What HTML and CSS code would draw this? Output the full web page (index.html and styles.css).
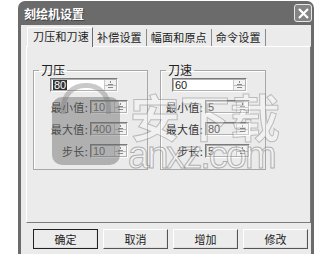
FILE: index.html
```html
<!DOCTYPE html>
<html lang="zh-CN">
<head>
    <meta charset="UTF-8">
    <title>刻绘机设置</title>
    <link rel="stylesheet" href="styles.css">
</head>
<body>
    <div class="window">
        <div class="titlebar">
            <span class="title">刻绘机设置</span>
            <span class="close">
                <svg width="13" height="13" viewBox="0 0 13 13"><path d="M2 2 L11 11 M11 2 L2 11" stroke="#fff" stroke-width="2.2"/></svg>
            </span>
        </div>
        <div class="body">
            <div class="tabs">
                <div class="tab active">刀压和刀速</div>
                <div class="tab">补偿设置</div>
                <div class="tab">幅面和原点</div>
                <div class="tab">命令设置</div>
            </div>
            <div class="panel">
                <fieldset class="group group-left">
                    <legend>刀压</legend>
                    <div class="spin spin-main"><span class="val"><span class="sel">80</span></span><span class="arrows"></span></div>
                    <div class="row"><label>最小值:</label><div class="spin spin-sub"><span class="val">10</span><span class="arrows"></span></div></div>
                    <div class="row"><label>最大值:</label><div class="spin spin-sub"><span class="val">400</span><span class="arrows"></span></div></div>
                    <div class="row"><label>步长:</label><div class="spin spin-sub"><span class="val">10</span><span class="arrows"></span></div></div>
                </fieldset>
                <fieldset class="group group-right">
                    <legend>刀速</legend>
                    <div class="spin spin-main"><span class="val">60</span><span class="arrows"></span></div>
                    <div class="row"><label>最小值:</label><div class="spin spin-sub"><span class="val">5</span><span class="arrows"></span></div></div>
                    <div class="row"><label>最大值:</label><div class="spin spin-sub"><span class="val">80</span><span class="arrows"></span></div></div>
                    <div class="row"><label>步长:</label><div class="spin spin-sub"><span class="val">5</span><span class="arrows"></span></div></div>
                </fieldset>
            </div>
            <div class="buttons">
                <button class="btn default">确定</button>
                <button class="btn">取消</button>
                <button class="btn">增加</button>
                <button class="btn">修改</button>
            </div>
        </div>
        <div class="wm-lock"><span class="wm-shackle"></span></div>
        <div class="wm-cn">安下载</div>
        <div class="wm-en">anxz.com</div>
    </div>
</body>
</html>
```

FILE: styles.css
```css
body {
    margin: 0;
    background: #fff;
    font-family: "Noto Sans CJK SC", "DejaVu Sans", sans-serif;
    font-size: 11px;
    color: #222;
}
.window {
    position: relative;
    margin: 1px 0 0 18px;
    width: 296px;
    height: 253px;
    box-sizing: border-box;
    padding: 0 3px;
    background: #6b6b6b;
    border-radius: 7px 7px 0 0;
    display: flex;
    flex-direction: column;
    overflow: hidden;
}
.titlebar {
    height: 24px;
    display: flex;
    align-items: center;
    justify-content: space-between;
    padding-left: 3px;
}
.title {
    color: #fff;
    font-size: 12px;
    font-weight: bold;
    text-shadow: 1px 1px 0 #444;
}
.close {
    width: 16px;
    height: 16px;
    border: 1px solid #e6e6e6;
    border-radius: 3px;
    background: #848484;
    display: flex;
    align-items: center;
    justify-content: center;
    margin-right: -1px;
}
.body {
    flex: 1;
    background: #ebebeb;
    padding: 3px 0 0 5px;
}
.tabs {
    display: flex;
    height: 18px;
    padding-left: 1px;
}
.tab {
    height: 17px;
    line-height: 17px;
    padding: 0 4px;
    margin-top: 1px;
    border-right: 1px solid #8a8a8a;
    letter-spacing: 0.2px;
    color: #222;
}
.tab.active {
    position: relative;
    z-index: 1;
    height: 19px;
    margin-top: -1px;
    margin-bottom: -1px;
    padding: 0 3px 0 5px;
    background: #ebebeb;
    border-left: 1px solid #fff;
    border-top: 1px solid #fff;
    border-right: 1px solid #6a6a6a;
}
.panel {
    width: 285px;
    height: 177px;
    box-sizing: border-box;
    border: 1px solid;
    border-color: #fff #7a7a7a #7a7a7a #fff;
    padding: 16px 0 0 6px;
    display: flex;
    align-items: flex-start;
}
.group {
    margin: 0;
    padding: 1px 0 0 0;
    border: 1px solid #a8a8a8;
    box-shadow: 1px 1px 0 #fff inset;
    height: 107px;
    box-sizing: border-box;
    display: flex;
    flex-direction: column;
    gap: 8px;
}
.group legend {
    margin-left: 5px;
    padding: 0 2px;
    font-size: 12px;
    line-height: 14px;
}
.group-left {
    width: 115px;
}
.group-right {
    width: 106px;
    margin-left: 12px;
}
.spin {
    height: 14px;
    box-sizing: border-box;
    border: 1px solid;
    border-color: #7a7a7a #fff #fff #7a7a7a;
    outline: 1px solid #b0b0b0;
    outline-offset: -2px;
    background: #fff;
    display: flex;
}
.spin .val {
    flex: 1;
    padding-left: 2px;
    line-height: 12px;
    font-family: "Liberation Sans", Arial, sans-serif;
    font-size: 11px;
}
.sel {
    background: #333;
    color: #fff;
    padding: 0 1px;
}
.arrows {
    width: 12px;
    border-left: 1px solid #c8c8c8;
    background:
        linear-gradient(#8a8a8a, #8a8a8a) 3px 5px / 5px 1px no-repeat,
        linear-gradient(#bbb, #bbb) 0 6px / 12px 1px no-repeat,
        linear-gradient(#8a8a8a, #8a8a8a) 5px 2px / 1px 2px no-repeat,
        linear-gradient(#8a8a8a, #8a8a8a) 3px 8px / 5px 1px no-repeat,
        #f2f2f2;
}
.spin-main {
    width: 68px;
    margin-left: 16px;
}
.group-right .spin-main {
    width: 75px;
    margin-left: 11px;
}
.row {
    display: flex;
    align-items: center;
    height: 14px;
}
.row label {
    width: 54px;
    margin-right: 2px;
    text-align: right;
    font-size: 11px;
    letter-spacing: 0.3px;
    white-space: nowrap;
    color: #333;
}
.group-right .row label {
    width: 42px;
}
.spin-sub {
    width: 38px;
    background: #ececec;
}
.spin-sub .val {
    color: #666;
}
.group-right .spin-sub {
    width: 45px;
}
.buttons {
    display: flex;
    gap: 5px;
    padding: 6px 0 0 7px;
}
.btn {
    width: 65px;
    height: 20px;
    padding: 0;
    font-family: inherit;
    font-size: 11px;
    color: #222;
    background: #ececec;
    border: 1px solid;
    border-color: #fff #555 #555 #fff;
    box-shadow: -1px -1px 0 #e0e0e0 inset;
}
.btn.default {
    outline: 1px solid #222;
    outline-offset: -1px;
}
.wm-lock {
    position: absolute;
    left: 34px;
    top: 96px;
    width: 68px;
    height: 68px;
    border-radius: 10px;
    background: rgba(105, 105, 105, 0.45);
}
.wm-shackle {
    position: absolute;
    left: 9px;
    top: -14px;
    width: 40px;
    height: 26px;
    border: 5px solid rgba(120, 120, 120, 0.4);
    border-bottom: none;
    border-radius: 24px 24px 0 0;
}
.wm-cn {
    position: absolute;
    left: 112px;
    top: 84px;
    font-size: 50px;
    line-height: 60px;
    font-weight: bold;
    color: rgba(255, 255, 255, 0.3);
    -webkit-text-stroke: 1px rgba(110, 110, 110, 0.4);
    pointer-events: none;
}
.wm-en {
    position: absolute;
    left: 110px;
    top: 134px;
    font-family: "Liberation Sans", Arial, sans-serif;
    font-size: 38px;
    line-height: 40px;
    letter-spacing: -2px;
    color: rgba(255, 255, 255, 0.35);
    -webkit-text-stroke: 1px rgba(110, 110, 110, 0.5);
    pointer-events: none;
}
```
